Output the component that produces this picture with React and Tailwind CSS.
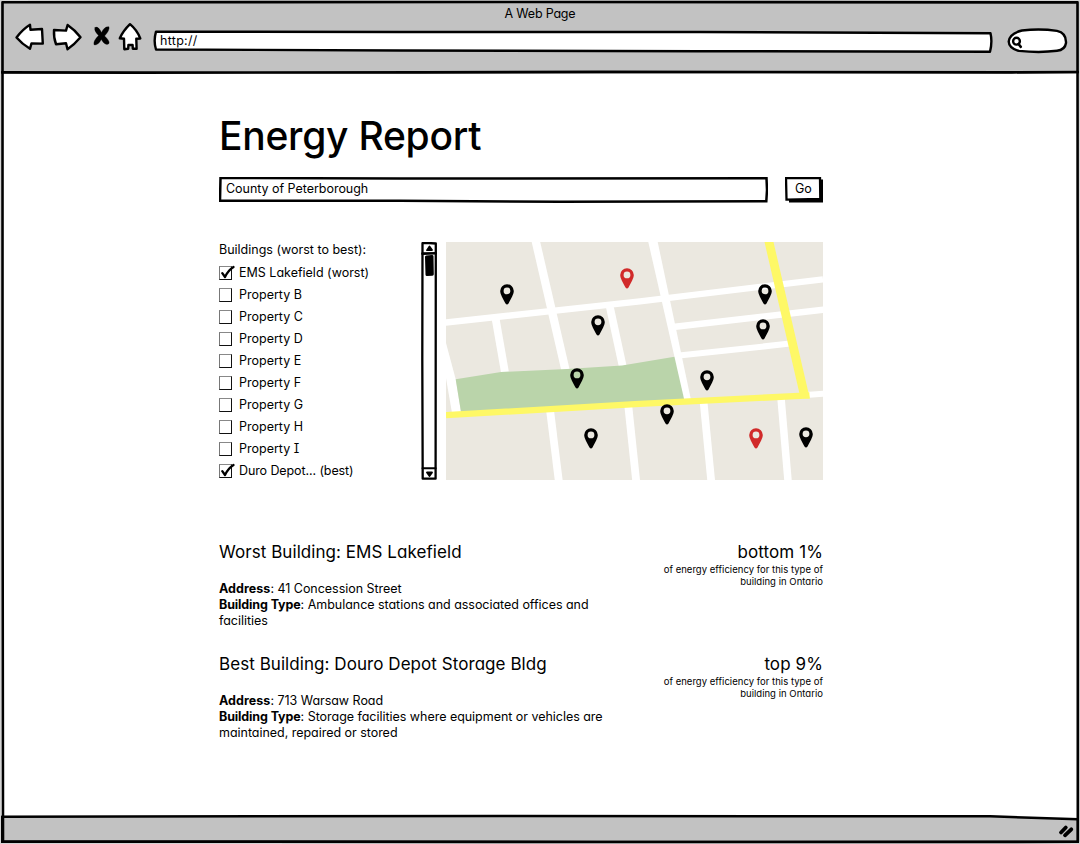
import React from "react";

const buildings = [
  { name: "EMS Lakefield (worst)", checked: true, tracking: "tracking-[0px]" },
  { name: "Property B" },
  { name: "Property C" },
  { name: "Property D" },
  { name: "Property E" },
  { name: "Property F" },
  { name: "Property G" },
  { name: "Property H" },
  { name: "Property I" },
  { name: "Duro Depot... (best)", checked: true, tracking: "tracking-[-0.1px]" },
];

const pins = [
  { x: 507, y: 284.3 },
  { x: 627, y: 268.3, alert: true },
  { x: 598, y: 315.2 },
  { x: 577, y: 368.3 },
  { x: 591, y: 428.3 },
  { x: 765, y: 284.3 },
  { x: 763, y: 319.3 },
  { x: 707, y: 370.2 },
  { x: 667, y: 404.2 },
  { x: 756, y: 428.3, alert: true },
  { x: 806, y: 427.2 },
];

function Ink({ viewBox, className, children }) {
  return (
    <svg
      viewBox={viewBox}
      preserveAspectRatio="none"
      className={className}
      fill="#fff"
      stroke="#000"
      strokeWidth="2.4"
      strokeLinejoin="round"
      strokeLinecap="round"
      aria-hidden="true"
    >
      {children}
    </svg>
  );
}

function BrowserBar() {
  return (
    <header className="relative h-[74px] shrink-0 bg-[#c2c2c2]">
      <Ink viewBox="0 0 1080 74" className="absolute inset-0 h-full w-full">
        <path d="M2 72.3 L140 72.6 L420 72.4 L600 71.8 L1012 72.3 L1078 72" fill="none" strokeWidth="2.7" />
      </Ink>
      <div className="relative flex h-[24px] items-center justify-center pt-[5px] text-[12.5px] tracking-[-0.2px]">
        A Web Page
      </div>
      <nav className="relative flex h-[32px] items-start pl-[14px]">
        <Ink viewBox="14 22 32 30" className="-mt-[2px] h-[30px] w-[32px]">
          <path d="M16.5 37.5 Q23 29 30 24.8 L30.5 29.8 L42 29 L42.8 43.6 L31.5 43.4 L30 48.8 Q22 44 16.5 37.5Z" />
        </Ink>
        <Ink viewBox="51 22 32 30" className="-mt-[2px] ml-[5px] h-[30px] w-[32px]">
          <path d="M54 30 L66 30.6 L67.6 25 Q75 30 80.5 37.3 Q74 45 67.5 49.3 L66 43.2 L56 44.2 Q53.6 38 54 30Z" />
        </Ink>
        <Ink viewBox="92 22 18 30" className="-mt-[2px] ml-[9px] h-[30px] w-[18px]">
          <path
            d="M95 27.5 Q98 25.5 101.5 32.5 Q104.5 26 109 26.8 Q110 30 104.6 36 Q110 41 109 43.5 Q105.5 46.5 101.300 39.500 Q98 45.800 94 44.800 Q93 41 98.500 35.500 Q93.500 30.500 95 27.500Z"
            fill="#000"
            strokeWidth="0.3"
          />
        </Ink>
        <Ink viewBox="117 22 26 30" className="-mt-[2px] ml-[7px] h-[30px] w-[26px]">
          <path d="M130 24.2 Q137 30 140.3 38.5 L136.3 38.8 L136.6 48.8 L132.8 48.8 L132.6 45 L128.4 45 L128.2 48.8 L124.3 49.2 L124 38.8 L119.8 38.3 Q123 31 130 24.2Z" />
        </Ink>
        <div className="relative ml-[10px] mt-[6px] h-[23px] w-[840px] pl-[7px] pt-[3px] text-[12.5px] leading-[16px] tracking-[0.3px]">
          <Ink viewBox="153 30 840 23" className="absolute inset-0 h-full w-full">
            <path d="M156 31.7 L400 32 L700 32 L990.5 33.3 Q992.5 42 990 51.7 L700 51.2 L400 50.5 L156 49.5 Q153.3 41 156 31.7Z" />
          </Ink>
          <span className="relative">http://</span>
        </div>
        <div className="ml-[13px] mt-[3px] h-[27px] w-[64px]">
          <Ink viewBox="1006 27 64 27" className="h-full w-full">
            <path d="M1022 30.5 Q1040 28.3 1057 30.9 Q1066.5 33 1066 43 Q1065 50 1057 50.8 Q1040 53 1019 50.9 Q1009 48.5 1008.7 41.5 Q1009.5 33.5 1022 30.5Z" />
            <circle cx="1016.5" cy="41.2" r="3.4" strokeWidth="2.4" />
            <path d="M1018.5 44 L1020.8 46.8" strokeWidth="2.6" />
          </Ink>
        </div>
      </nav>
    </header>
  );
}

function SearchRow() {
  return (
    <form className="mt-[17px] flex justify-between">
      <div className="relative h-[26px] w-[549px] pl-[7px] text-[12.5px] leading-[23px] tracking-[-0.03px]">
        <Ink viewBox="219 177 549 26" className="absolute inset-0 h-full w-full">
          <path
            d="M220.5 178 L400 178.5 L766.5 178.3 L767 190 L766.3 201.3 L560 201.7 L400 200.8 L220 200.8Z"
            strokeWidth="2.5"
            strokeLinejoin="miter"
          />
        </Ink>
        <span className="relative">County of Peterborough</span>
      </div>
      <div role="button" className="relative h-[26px] w-[38px] pl-[10px] text-[12.5px] leading-[23px]">
        <Ink viewBox="785 177 38 26" className="absolute inset-0 h-full w-full">
          <path d="M789 202.500 L789 199 L820 199 L820 179.500 L823 179.500 L823 202.500Z" fill="#000" stroke="none" />
          <path d="M786 178 L820 178 L820.3 199 L786.5 199.7Z" strokeWidth="2.300" strokeLinejoin="miter" />
        </Ink>
        <span className="relative">Go</span>
      </div>
    </form>
  );
}

function CheckItem({ name, checked, tracking = "tracking-[0px]" }) {
  return (
    <li className="flex h-[22px] gap-[7px] leading-[22px]">
      <span className="relative mt-[4px] h-[14px] w-[13px] border border-[#111] border-l-[#777] border-t-[#888]">
        {checked && (
          <Ink viewBox="0 0 16 15" className="absolute -left-px -top-[2px] h-[15px] w-[16px]">
            <path d="M3.3 8.2 L6 12 Q9 5.500 14.500 2" fill="none" strokeWidth="2.300" />
          </Ink>
        )}
      </span>
      <span className={tracking}>{name}</span>
    </li>
  );
}

function BuildingList() {
  return (
    <div className="flex w-[218px] justify-between text-[12.5px]">
      <div>
        <h2 className="mb-[5px] h-[15px] leading-[15px]">Buildings (worst to best):</h2>
        <ul>
          {buildings.map((b) => (
            <CheckItem key={b.name} {...b} />
          ))}
        </ul>
      </div>
      <Ink viewBox="421 242 16 238" className="h-[238px] w-[16px]">
        <path d="M422.5 243.2 L429 243 L435.8 243.5 L435.7 360 L435.6 478.7 L422.7 478.7 L422.3 360Z" strokeWidth="2.3" />
        <path d="M422.5 253.6 L435.7 253.2" strokeWidth="2.6" />
        <path d="M422.5 468.3 L435.7 468.3" strokeWidth="1.9" />
        <path d="M429.5 246.5 L432 250 L427 250.2Z M427 472.5 L432 472.5 L429.5 476Z" fill="#000" strokeWidth="1.8" />
        <path d="M426.5 257 L432 256.500 L432.300 274.300 L427 274.600Z" fill="#000" strokeWidth="3" />
      </Ink>
    </div>
  );
}

function StreetMap() {
  return (
    <svg viewBox="446 242 377 238" className="h-[238px] w-[377px]" role="img" aria-label="Map of buildings">
      <rect x="446" y="242" width="377" height="238" fill="#ebe8e0" />
      <g stroke="#fff" fill="none">
        <path d="M440 323.2 L640 301.3 L823 279.3" strokeWidth="6.3" />
        <path d="M534.8 237 L566.4 374" strokeWidth="8.3" />
        <path d="M495.3 317 L505.6 376" strokeWidth="7.8" />
        <path d="M609 303 L623.5 370" strokeWidth="7.8" />
        <path d="M673 327 L830 308.9" strokeWidth="6.4" />
        <path d="M679 355.6 L790 343.6" strokeWidth="6" />
        <path d="M806 394.9 L830 393.4" strokeWidth="6" />
        <path d="M550 410 L559.2 484" strokeWidth="7.8" />
        <path d="M628.3 406 L636.5 484" strokeWidth="7.8" />
        <path d="M703.6 402 L711.5 484" strokeWidth="7.7" />
        <path d="M781 398 L788.3 484" strokeWidth="7.5" />
      </g>
      <path d="M446 343 L455.7 379.3 L461 412 L452 413 L446 378Z" fill="#fff" />
      <path d="M455.7 379.3 L501 372 L567 369 L622 365.5 L676 356.5 L686 400 L461 412Z" fill="#bad4aa" />
      <path d="M648.3 242 L657.7 242 L691 400 L684.3 400Z" fill="#fff" />
      <path d="M446 415.2 L635 404.1 L809.5 395.4" stroke="#fef866" strokeWidth="6.3" fill="none" />
      <path d="M764.5 242 L773.5 242 L809.8 398.5 L800.5 398Z" fill="#fef866" />
      {pins.map((p) => (
        <path
          key={`${p.x}-${p.y}`}
          transform={`translate(${p.x - 7} ${p.y})`}
          fill={p.alert ? "#d12a2a" : "#000"}
          fillRule="evenodd"
          d="M7 0 A6.8 6.7 0 0 1 13.8 6.7 C13.8 10 11 14.300 8.500 19.200 Q7 21.200 5.500 19.200 C3 14.300 .2 10 .2 6.7 A6.8 6.7 0 0 1 7 0Z M7 3.200 A3.400 3.400 0 1 0 7 10 A3.400 3.400 0 1 0 7 3.200Z"
        />
      ))}
    </svg>
  );
}

function Report({ title, address, type, rank }) {
  return (
    <section className="flex justify-between">
      <div className="w-[400px]">
        <h2 className="whitespace-nowrap text-[17px] leading-[24px] tracking-[0.06px]">{title}</h2>
        <div className="mt-[17px] text-[12.5px] leading-[16px] tracking-[-0.03px]">
          <p>
            <b className="font-bold tracking-[0.05px]">Address</b>: {address}
          </p>
          <p>
            <b className="font-bold tracking-[-0.12px]">Building Type</b>: {type[0]}
          </p>
          <p>{type[1]}</p>
        </div>
      </div>
      <div className="w-[180px] text-right">
        <p className="text-[17px] leading-[24px] tracking-[0.1px]">{rank}</p>
        <p className="text-[9.5px] leading-[12px] tracking-[0.03px]">
          of energy efficiency for this type of
          <br />
          building in Ontario
        </p>
      </div>
    </section>
  );
}

export default function App() {
  return (
    <div className="relative flex h-[844px] w-[1080px] flex-col overflow-hidden bg-white font-['Inter',sans-serif] text-black [font-feature-settings:'cv11'_1,'cv08'_1]">
      <BrowserBar />
      <main className="ml-[219px] w-[604px] grow pt-[38px]">
        <h1 className="text-[39px] leading-[48px] font-[450] tracking-[-0.26px]">Energy Report</h1>
        <SearchRow />
        <div className="mt-[39px] flex items-start justify-between">
          <BuildingList />
          <StreetMap />
        </div>
        <div className="mt-[58px] flex flex-col gap-[23px]">
          <Report
            title="Worst Building: EMS Lakefield"
            address="41 Concession Street"
            type={["Ambulance stations and associated offices and", "facilities"]}
            rank="bottom 1%"
          />
          <Report
            title="Best Building: Douro Depot Storage Bldg"
            address="713 Warsaw Road"
            type={["Storage facilities where equipment or vehicles are", "maintained, repaired or stored"]}
            rank="top 9%"
          />
        </div>
      </main>
      <footer className="h-[30px] shrink-0">
        <Ink viewBox="0 814 1080 30" className="h-full w-full">
          <path d="M2 816.7 L500 816 L990 816.3 L1078 819.3 L1078 842 L2 842Z" fill="#c2c2c2" strokeWidth="2.5" />
          <path d="M1061 832.5 L1065.800 827.500 M1065 835.300 L1071.300 829.300" strokeWidth="3.800" />
        </Ink>
      </footer>
      <Ink viewBox="0 0 1080 844" className="pointer-events-none absolute inset-0 h-full w-full">
        <path d="M0 0 H1080 V844 H0Z" fill="none" stroke="#d4d4d4" strokeWidth="2" />
        <path
          d="M2.5 2.2 L540 2 L1077.5 2.4 L1077.8 420 L1077.8 841.8 L600 842 L3 841.3 L2.5 420Z"
          fill="none"
          strokeWidth="2.6"
        />
      </Ink>
    </div>
  );
}
